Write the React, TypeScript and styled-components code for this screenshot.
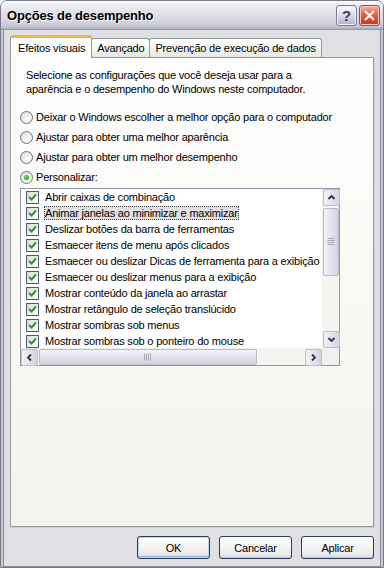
import React from "react";
import styled, { createGlobalStyle, css } from "styled-components";

const Global = createGlobalStyle`
  html, body { margin: 0; padding: 0; background: #ffffff; }
  * { box-sizing: border-box; }
  body { font-family: "Liberation Sans", Arial, sans-serif; font-size: 11px; color: #000; letter-spacing: -0.2px; }
`;

const Window = styled.div`
  width: 384px;
  height: 568px;
  display: flex;
  flex-direction: column;
  background: #e0dfe3;
  border: 1px solid #7a7a88;
  border-radius: 7px 7px 0 0;
  box-shadow: inset 1px 0 0 #f4f4f8, inset -1px 0 0 #c4c4cc, inset 0 -1px 0 #c4c4cc;
  overflow: hidden;
`;

const TitleBar = styled.div`
  height: 29px;
  flex: none;
  display: flex;
  align-items: center;
  justify-content: space-between;
  padding: 0 3px 0 6px;
  background: linear-gradient(to bottom, #ffffff 0%, #f0f0f4 12%, #e2e2ea 40%, #d6d6e0 70%, #c6c6d2 92%, #a8a8b8 100%);
  border-bottom: 1px solid #9a9aaa;
`;

const Title = styled.div`
  font-family: "Liberation Sans", Arial, sans-serif;
  font-weight: bold;
  font-size: 13px;
  color: #000;
  text-shadow: 1px 1px 0 #ffffff;
  letter-spacing: -0.2px;
`;

const Caps = styled.div`
  display: flex;
  gap: 2px;
`;

const CapButton = styled.div<{ $close?: boolean }>`
  width: 21px;
  height: 21px;
  border-radius: 3px;
  display: flex;
  align-items: center;
  justify-content: center;
  border: 1px solid ${(p) => (p.$close ? "#a0504a" : "#7c7c94")};
  ${(p) =>
    p.$close
      ? css`
          background: linear-gradient(to bottom, #f4b8a8 0%, #e6705a 35%, #d4482e 70%, #c43c20 100%);
          box-shadow: inset 0 0 0 1px #f6c8bc;
        `
      : css`
          background: linear-gradient(to bottom, #ffffff 0%, #e0e0ea 40%, #c4c4d4 80%, #aeaec4 100%);
          box-shadow: inset 0 0 0 1px #f0f0f6;
        `}
  font-family: "Liberation Sans", Arial, sans-serif;
  font-weight: bold;
  font-size: 15px;
  color: #3c3c58;
`;

const Client = styled.div`
  flex: 1;
  display: flex;
  flex-direction: column;
  padding: 5px 7px 8px 7px;
  border-left: 2px solid #c8c8d2;
  border-right: 2px solid #c8c8d2;
  box-shadow: inset 1px 0 0 #8a8a9a, inset -1px 0 0 #8a8a9a, inset 0 -1px 0 #8a8a9a;
`;

const TabStrip = styled.div`
  display: flex;
  align-items: flex-end;
  height: 22px;
  padding-left: 0;
  position: relative;
  z-index: 1;
`;

const Tab = styled.div<{ $active?: boolean }>`
  font-size: 11px;
  display: flex;
  align-items: center;
  border: 1px solid #919b9c;
  border-bottom: none;
  border-radius: 3px 3px 0 0;
  white-space: nowrap;
  ${(p) =>
    p.$active
      ? css`
          padding: 0 6px 0 7px;
          background: #ffffff;
          border-top: 3px solid #f2b44a;
          margin-bottom: -1px;
          height: 23px;
        `
      : css`
          height: 19px;
          padding: 0 5px;
          background: linear-gradient(to bottom, #ffffff 0%, #f6f6f3 50%, #e8e8e2 100%);
          margin-left: -1px;
        `}
`;

const Panel = styled.div`
  height: 470px;
  border: 1px solid #919b9c;
  background: linear-gradient(to bottom, #fdfdfd 0%, #f9f9f6 40%, #f4f3ee 100%);
  padding: 10px 0 0 9px;
  box-shadow: 1px 1px 0 #d0d0d8;
`;

const Intro = styled.p`
  margin: 0 0 11px 6px;
  line-height: 14px;
  font-size: 11px;
  width: 300px;
`;

const RadioRow = styled.div`
  display: flex;
  align-items: center;
  gap: 3px;
  height: 20px;
`;

const Radio = styled.span<{ $checked?: boolean }>`
  width: 13px;
  height: 13px;
  border-radius: 50%;
  border: 1px solid #6e7488;
  background: radial-gradient(circle at 65% 70%, #ffffff 0%, #f0f0ee 40%, #d6d6d2 100%);
  display: inline-flex;
  align-items: center;
  justify-content: center;
  flex: none;
  &::after {
    content: "";
    display: ${(p) => (p.$checked ? "block" : "none")};
    width: 5px;
    height: 5px;
    border-radius: 50%;
    background: radial-gradient(circle at 40% 40%, #7edc7e 0%, #21a121 70%, #188018 100%);
  }
`;

const ListBox = styled.div`
  margin-top: 1px;
  width: 320px;
  height: 178px;
  border: 1px solid #8e98a8;
  background: #ffffff;
  display: grid;
  grid-template-columns: 1fr 17px;
  grid-template-rows: 1fr 17px;
`;

const Rows = styled.div`
  overflow: hidden;
  padding-left: 5px;
`;

const Row = styled.div`
  height: 16px;
  display: flex;
  align-items: center;
  gap: 5px;
  white-space: nowrap;
`;

const Check = styled.span`
  width: 13px;
  height: 13px;
  border: 1px solid #4a5a78;
  background: linear-gradient(135deg, #dcdcd6 0%, #f0f0ec 60%, #ffffff 100%);
  flex: none;
  display: inline-flex;
  align-items: center;
  justify-content: center;
`;

const Label = styled.span<{ $focus?: boolean }>`
  padding: 0 1px;
  line-height: 14px;
  ${(p) =>
    p.$focus &&
    css`
      background: #e0dfe3;
      outline: 1px dotted #404040;
      outline-offset: -1px;
    `}
`;

const VScroll = styled.div`
  display: flex;
  flex-direction: column;
  background: #f4f4f0;
  border-left: 1px solid #f0f0f0;
`;

const HScroll = styled.div`
  display: flex;
  background: #f4f4f0;
  border-top: 1px solid #f0f0f0;
`;

const Corner = styled.div`
  background: #f0f0ec;
`;

const ArrowBtn = styled.div`
  width: 17px;
  height: 17px;
  flex: none;
  border: 1px solid #c0c0cc;
  border-radius: 2px;
  background: linear-gradient(to right, #f2f2f6 0%, #e0e0ea 60%, #d2d2de 100%);
  display: flex;
  align-items: center;
  justify-content: center;
`;

const Track = styled.div<{ $vertical?: boolean }>`
  flex: 1;
  display: flex;
  flex-direction: ${(p) => (p.$vertical ? "column" : "row")};
`;

const Thumb = styled.div<{ $vertical?: boolean }>`
  border: 1px solid #b8b8c8;
  border-radius: 2px;
  display: flex;
  align-items: center;
  justify-content: center;
  ${(p) =>
    p.$vertical
      ? css`
          margin-top: 2px;
          height: 68px;
          background: linear-gradient(to right, #f4f4f8 0%, #e2e2ec 50%, #d4d4e0 100%);
        `
      : css`
          width: 218px;
          margin-left: 1px;
          background: linear-gradient(to bottom, #f4f4f8 0%, #e2e2ec 50%, #d4d4e0 100%);
        `}
`;

const ButtonRow = styled.div`
  display: flex;
  justify-content: flex-end;
  gap: 9px;
  margin-top: 9px;
`;

const Button = styled.div<{ $default?: boolean }>`
  width: 73px;
  height: 23px;
  border: 1px solid #2c3c5c;
  border-radius: 3px;
  background: linear-gradient(to bottom, #ffffff 0%, #f6f6f4 40%, #ececea 80%, #d8d8e0 100%);
  display: flex;
  align-items: center;
  justify-content: center;
  font-size: 11px;
  ${(p) =>
    p.$default
      ? css`
          box-shadow: inset 0 0 0 1px #c2d2f2, inset 0 -1px 0 1px #98b0e0;
        `
      : css`
          box-shadow: inset 0 -1px 0 #c6c6d4;
        `}
`;

const Chevron = ({ dir }: { dir: "up" | "down" | "left" | "right" }) => {
  const pts: Record<string, string> = {
    up: "1.5,6 4.5,3 7.5,6",
    down: "1.5,3 4.5,6 7.5,3",
    left: "6,1.5 3,4.5 6,7.5",
    right: "3,1.5 6,4.5 3,7.5",
  };
  return (
    <svg width="9" height="9" viewBox="0 0 9 9">
      <polyline points={pts[dir]} fill="none" stroke="#30304a" strokeWidth="1.8" />
    </svg>
  );
};

const Grip = ({ vertical }: { vertical?: boolean }) => (
  <svg width="8" height="8" viewBox="0 0 8 8">
    {[0, 2, 4, 6].map((o) =>
      vertical ? (
        <line key={o} x1="0.5" x2="7.5" y1={o + 0.5} y2={o + 0.5} stroke="#a8a8bc" strokeWidth="1" />
      ) : (
        <line key={o} y1="0.5" y2="7.5" x1={o + 0.5} x2={o + 0.5} stroke="#a8a8bc" strokeWidth="1" />
      )
    )}
  </svg>
);

const CheckMark = () => (
  <svg width="9" height="9" viewBox="0 0 9 9">
    <polyline points="1,4 3.5,6.5 8,1.5" fill="none" stroke="#21a121" strokeWidth="2" />
  </svg>
);

const radios = [
  "Deixar o Windows escolher a melhor opção para o computador",
  "Ajustar para obter uma melhor aparência",
  "Ajustar para obter um melhor desempenho",
  "Personalizar:",
];

const items = [
  "Abrir caixas de combinação",
  "Animar janelas ao minimizar e maximizar",
  "Deslizar botões da barra de ferramentas",
  "Esmaecer itens de menu após clicados",
  "Esmaecer ou deslizar Dicas de ferramenta para a exibição",
  "Esmaecer ou deslizar menus para a exibição",
  "Mostrar conteúdo da janela ao arrastar",
  "Mostrar retângulo de seleção translúcido",
  "Mostrar sombras sob menus",
  "Mostrar sombras sob o ponteiro do mouse",
];

export default function App() {
  return (
    <>
      <Global />
      <Window>
        <TitleBar>
          <Title>Opções de desempenho</Title>
          <Caps>
            <CapButton>?</CapButton>
            <CapButton $close>
              <svg width="13" height="13" viewBox="0 0 13 13">
                <path d="M2 2 L11 11 M11 2 L2 11" stroke="#ffffff" strokeWidth="2.2" />
              </svg>
            </CapButton>
          </Caps>
        </TitleBar>
        <Client>
          <TabStrip>
            <Tab $active>Efeitos visuais</Tab>
            <Tab>Avançado</Tab>
            <Tab>Prevenção de execução de dados</Tab>
          </TabStrip>
          <Panel>
            <Intro>
              Selecione as configurações que você deseja usar para a aparência e o desempenho do Windows neste computador.
            </Intro>
            {radios.map((r, i) => (
              <RadioRow key={r}>
                <Radio $checked={i === 3} />
                <span>{r}</span>
              </RadioRow>
            ))}
            <ListBox>
              <Rows>
                {items.map((t, i) => (
                  <Row key={t}>
                    <Check>
                      <CheckMark />
                    </Check>
                    <Label $focus={i === 1}>{t}</Label>
                  </Row>
                ))}
              </Rows>
              <VScroll>
                <ArrowBtn>
                  <Chevron dir="up" />
                </ArrowBtn>
                <Track $vertical>
                  <Thumb $vertical>
                    <Grip vertical />
                  </Thumb>
                </Track>
                <ArrowBtn>
                  <Chevron dir="down" />
                </ArrowBtn>
              </VScroll>
              <HScroll>
                <ArrowBtn>
                  <Chevron dir="left" />
                </ArrowBtn>
                <Track>
                  <Thumb>
                    <Grip />
                  </Thumb>
                </Track>
                <ArrowBtn>
                  <Chevron dir="right" />
                </ArrowBtn>
              </HScroll>
              <Corner />
            </ListBox>
          </Panel>
          <ButtonRow>
            <Button $default>OK</Button>
            <Button>Cancelar</Button>
            <Button>Aplicar</Button>
          </ButtonRow>
        </Client>
      </Window>
    </>
  );
}
